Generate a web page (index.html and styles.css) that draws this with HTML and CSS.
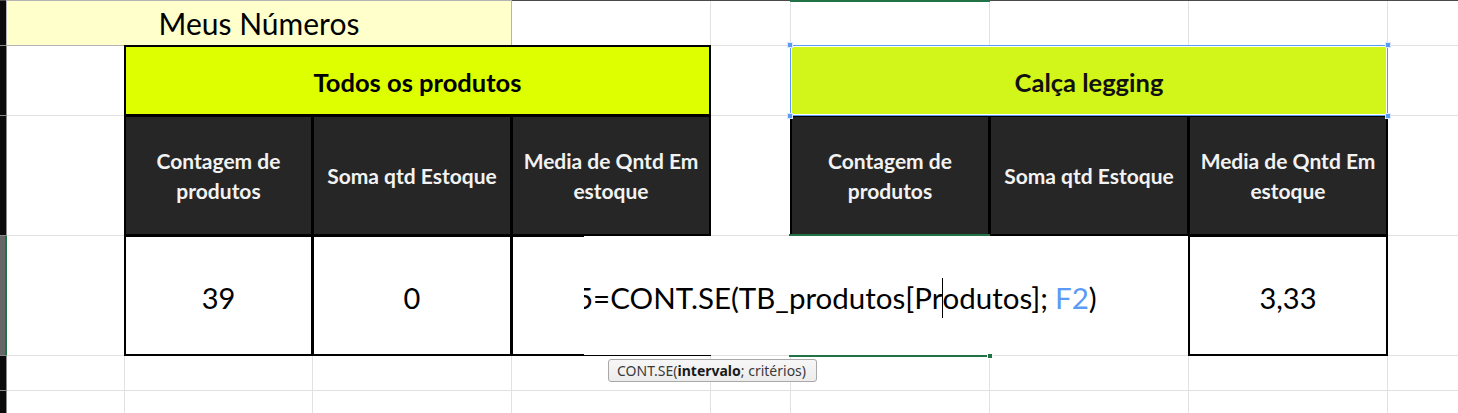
FILE: index.html
```html
<!DOCTYPE html>
<html lang="pt-BR">
<head>
<meta charset="utf-8">
<title>Meus Números</title>
<link rel="stylesheet" href="styles.css">
</head>
<body>
<div class="app">
  <div class="rowheads">
    <div class="rh"></div>
    <div class="rh"></div>
    <div class="rh"></div>
    <div class="rh rh-active"></div>
    <div class="rh"></div>
    <div class="rh"></div>
  </div>
  <div class="sheet">
    <!-- row 1 -->
    <div class="c title span3">Meus Números</div>
    <div class="c"></div><div class="c"></div><div class="c"></div><div class="c"></div><div class="c"></div><div class="c"></div>
    <!-- row 2 -->
    <div class="c"></div>
    <div class="c head-all span3">Todos os produtos</div>
    <div class="c"></div>
    <div class="c head-sel span3">Calça legging
      <span class="handle h-tl"></span><span class="handle h-tr"></span>
      <span class="handle h-bl"></span><span class="handle h-br"></span>
    </div>
    <div class="c"></div>
    <!-- row 3 -->
    <div class="c"></div>
    <div class="c dark">Contagem de<br>produtos</div>
    <div class="c dark">Soma qtd Estoque</div>
    <div class="c dark">Media de Qntd Em<br>estoque</div>
    <div class="c"></div>
    <div class="c dark">Contagem de<br>produtos</div>
    <div class="c dark">Soma qtd Estoque</div>
    <div class="c dark">Media de Qntd Em<br>estoque</div>
    <div class="c"></div>
    <!-- row 4 -->
    <div class="c"></div>
    <div class="c val">39</div>
    <div class="c val">0</div>
    <div class="c val"></div>
    <div class="c"></div>
    <div class="c"></div>
    <div class="c"></div>
    <div class="c val">3,33</div>
    <div class="c"></div>
    <!-- row 5 -->
    <div class="c"></div><div class="c"></div><div class="c"></div><div class="c"></div><div class="c"></div><div class="c"></div><div class="c"></div><div class="c"></div><div class="c"></div>
    <!-- row 6 -->
    <div class="c"></div><div class="c"></div><div class="c"></div><div class="c"></div><div class="c"></div><div class="c"></div><div class="c"></div><div class="c"></div><div class="c"></div>
  </div>

  <div class="colsel"></div>
  <div class="editor"><span class="edit-text">5=CONT.SE(TB_produtos[Pr<span class="caret"></span>odutos]; <span class="ref">F2</span>)</span></div>
  <div class="active"><span class="fill-handle"></span></div>
  <div class="tip">CONT.SE(<b>intervalo</b>; critérios)</div>
</div>
</body>
</html>
```

FILE: styles.css
```css
* { box-sizing: border-box; }
html, body { margin: 0; padding: 0; background: #fff; }
body { width: 1458px; height: 413px; overflow: hidden; font-family: "Lato", "Carlito", sans-serif; }

.app {
  position: relative;
  display: flex;
  border-top: 1px solid #4a4a4a;
  height: 413px;
}

.rowheads {
  width: 7px;
  display: grid;
  grid-template-rows: 44px 69px 119px 119px 34px 40px;
  row-gap: 1px;
  background: #8a8a8a;
}
.rh { background: #0b0b0b; box-shadow: inset -1px 0 0 #8a8a8a; }
.rh-active { background: #676767; box-shadow: inset -2px 0 0 #217346; }

.sheet {
  flex: 1;
  display: grid;
  grid-template-columns: 117px 187px 198px 198px 79px 198px 198px 198px 1fr;
  grid-template-rows: 44px 69px 119px 119px 34px 40px;
  gap: 1px;
  background: #e1e1e1;
  align-content: start;
}

.c {
  background: #fff;
  display: flex;
  align-items: center;
  justify-content: center;
  text-align: center;
}
.span3 { grid-column: span 3; }

.title {
  background: #ffffcc;
  font-size: 30px;
  color: #000;
  outline: 1px solid #b4b4b4;
}

.head-all {
  background: #ddff00;
  font-weight: 700;
  font-size: 25.5px;
  color: #000;
  outline: 2px solid #000;
  outline-offset: -1px;
  padding-top: 3px;
}

.head-sel {
  position: relative;
  z-index: 2;
  background: #d2f51a;
  font-weight: 700;
  font-size: 25.5px;
  color: #111;
  outline: 1px solid #5b9bf6;
  box-shadow: inset 0 0 0 1px #fff;
  padding-top: 3px;
}
.handle {
  position: absolute;
  width: 6px; height: 6px;
  background: #5b9bf6;
  border: 1px solid #dbe8fd;
}
.h-tl { left: -4px; top: -4px; }
.h-tr { right: -4px; top: -4px; }
.h-bl { left: -4px; bottom: -4px; }
.h-br { right: -4px; bottom: -4px; }

.dark {
  background: #262626;
  color: #f2f2f2;
  font-weight: 700;
  font-size: 21px;
  line-height: 30px;
  outline: 2px solid #000;
  outline-offset: -1px;
}

.val {
  font-size: 29px;
  color: #000;
  outline: 2px solid #000;
  outline-offset: -1px;
  padding-top: 4px;
}

.colsel {
  position: absolute;
  left: 790px; top: -1px;
  width: 200px; height: 2px;
  background: #217346;
}

.editor {
  position: absolute;
  left: 584px; top: 235px;
  width: 604px; height: 119px;
  background: #fff;
  overflow: hidden;
  display: flex;
  align-items: center;
  padding-top: 4px;
  z-index: 3;
}
.edit-text {
  white-space: nowrap;
  font-size: 29.5px;
  color: #000;
  margin-left: -8px;
  display: inline-flex;
  align-items: center;
}
.caret {
  display: inline-block;
  width: 1px;
  height: 40px;
  background: #000;
  margin: 0 -0.5px;
}
.ref { color: #5b9bf6; padding-left: 7px; }

.active {
  position: absolute;
  left: 789px; top: 233px;
  width: 201px; height: 123px;
  border-top: 2px solid #217346;
  border-bottom: 2px solid #217346;
  z-index: 4;
}
.fill-handle {
  position: absolute;
  right: -3px; bottom: -4px;
  width: 6px; height: 6px;
  background: #217346;
  border: 1px solid #fff;
}

.tip {
  position: absolute;
  left: 608px; top: 358px;
  width: 209px; height: 23px;
  background: linear-gradient(#f7f7f7, #ececec);
  border: 1px solid #a8a8a8;
  border-radius: 3px;
  font-family: "Noto Sans", "Open Sans", sans-serif;
  font-size: 14px;
  color: #3a3a3a;
  display: flex;
  align-items: center;
  padding-left: 8px;
  white-space: nowrap;
  z-index: 5;
}
.tip b { color: #1a1a1a; }
```
